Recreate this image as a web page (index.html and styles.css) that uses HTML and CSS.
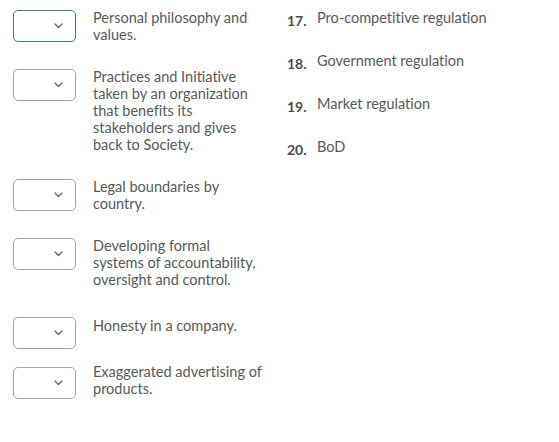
FILE: index.html
```html
<!DOCTYPE html>
<html lang="en">
<head>
<meta charset="utf-8">
<title>Matching</title>
<link rel="stylesheet" href="styles.css">
</head>
<body>
<div class="page">
  <div class="prompts">
    <div class="row">
      <div class="select focused"><svg width="9" height="6" viewBox="0 0 9 6"><path d="M1 1l3.5 3.5L8 1" fill="none" stroke="#6e7376" stroke-width="1.5" stroke-linecap="round" stroke-linejoin="round"/></svg></div>
      <div class="prompt">Personal philosophy and values.</div>
    </div>
    <div class="row">
      <div class="select"><svg width="9" height="6" viewBox="0 0 9 6"><path d="M1 1l3.5 3.5L8 1" fill="none" stroke="#6e7376" stroke-width="1.5" stroke-linecap="round" stroke-linejoin="round"/></svg></div>
      <div class="prompt">Practices and Initiative taken by an organization that benefits its stakeholders and gives back to Society.</div>
    </div>
    <div class="row">
      <div class="select"><svg width="9" height="6" viewBox="0 0 9 6"><path d="M1 1l3.5 3.5L8 1" fill="none" stroke="#6e7376" stroke-width="1.5" stroke-linecap="round" stroke-linejoin="round"/></svg></div>
      <div class="prompt">Legal boundaries by country.</div>
    </div>
    <div class="row row-wide">
      <div class="select"><svg width="9" height="6" viewBox="0 0 9 6"><path d="M1 1l3.5 3.5L8 1" fill="none" stroke="#6e7376" stroke-width="1.5" stroke-linecap="round" stroke-linejoin="round"/></svg></div>
      <div class="prompt">Developing formal systems of accountability, oversight and control.</div>
    </div>
    <div class="row row-single">
      <div class="select"><svg width="9" height="6" viewBox="0 0 9 6"><path d="M1 1l3.5 3.5L8 1" fill="none" stroke="#6e7376" stroke-width="1.5" stroke-linecap="round" stroke-linejoin="round"/></svg></div>
      <div class="prompt">Honesty in a company.</div>
    </div>
    <div class="row row-last">
      <div class="select"><svg width="9" height="6" viewBox="0 0 9 6"><path d="M1 1l3.5 3.5L8 1" fill="none" stroke="#6e7376" stroke-width="1.5" stroke-linecap="round" stroke-linejoin="round"/></svg></div>
      <div class="prompt">Exaggerated advertising of products.</div>
    </div>
  </div>
  <ol class="choices">
    <li class="choice"><span class="num">17.</span><span class="label">Pro-competitive regulation</span></li>
    <li class="choice"><span class="num">18.</span><span class="label">Government regulation</span></li>
    <li class="choice"><span class="num">19.</span><span class="label">Market regulation</span></li>
    <li class="choice"><span class="num">20.</span><span class="label">BoD</span></li>
  </ol>
</div>
</body>
</html>
```

FILE: styles.css
```css
html, body {
  margin: 0;
  padding: 0;
  background: #ffffff;
}

body {
  font-family: Lato, "Open Sans", sans-serif;
  font-size: 14.5px;
  line-height: 17px;
  color: #565a5c;
  font-variant-ligatures: none;
}

.page {
  display: grid;
  grid-template-columns: 250px 1fr;
  column-gap: 24px;
  padding: 9px 0 0 13px;
}

.prompts {
  display: flex;
  flex-direction: column;
}

.row {
  display: flex;
  align-items: flex-start;
  gap: 17px;
  margin-bottom: 25px;
}

.row-wide {
  margin-bottom: 28px;
}

.row-single {
  margin-bottom: 14px;
}

.row-single .prompt {
  margin-top: 1px;
}

.row-last .select {
  margin-top: 4px;
}

.select {
  box-sizing: border-box;
  flex: 0 0 63px;
  width: 63px;
  height: 32px;
  margin-top: 1px;
  border: 1px solid #a3a7a9;
  border-radius: 5px;
  background: #ffffff;
  display: flex;
  align-items: center;
  justify-content: flex-end;
  padding-right: 12px;
}

.select svg {
  display: block;
}

.select.focused {
  border-color: #3e7a88;
}

.prompt {
  width: 170px;
}

.choices {
  list-style: none;
  margin: 0;
  padding: 0;
  display: flex;
  flex-direction: column;
  gap: 23px;
}

.choice {
  display: flex;
  align-items: flex-start;
}

.num {
  width: 30px;
  flex: 0 0 30px;
  font-size: 14px;
  font-weight: 700;
  color: #494c4e;
  margin-top: 3px;
}

.label {
  color: #565a5c;
}
```
